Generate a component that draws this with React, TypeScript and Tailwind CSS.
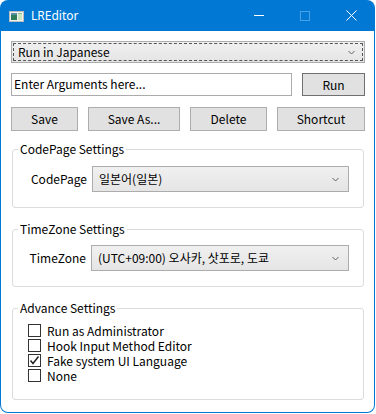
import React from "react";

const F = { fontFamily: '"Noto Sans CJK KR", "Noto Sans", sans-serif' };

function Chevron() {
  return (
    <svg width="7" height="5" viewBox="0 0 7 5" className="shrink-0">
      <path d="M0.5 1 L3.5 4 L6.5 1" fill="none" stroke="#606060" strokeWidth="1" />
    </svg>
  );
}

function Combo({ text, focused, className }: { text: string; focused?: boolean; className?: string }) {
  return (
    <div
      className={`flex items-center border border-[#acacac] bg-gradient-to-b from-[#f0f0f0] to-[#e5e5e5] text-[12px] text-black ${className ?? ""}`}
    >
      <div
        className={`flex flex-1 items-center self-stretch justify-between pl-[4px] pr-[7px] ${
          focused ? "m-[1px] border border-dashed border-[#555]" : "m-[1px] border border-transparent"
        }`}
      >
        <span className="leading-none">{text}</span>
        <Chevron />
      </div>
    </div>
  );
}

function Btn({ label, className, dark }: { label: string; className?: string; dark?: boolean }) {
  return (
    <div
      className={`flex items-center justify-center bg-[#e1e1e1] border text-[12px] text-black ${
        dark ? "border-[#707070]" : "border-[#adadad]"
      } ${className ?? ""}`}
    >
      {label}
    </div>
  );
}

function Group({ title, children, className }: { title: string; children: React.ReactNode; className?: string }) {
  return (
    <fieldset className={`mx-[1px] border border-[#dcdcdc] rounded-[3px] ${className ?? ""}`}>
      <legend className="ml-[5px] px-[2px] text-[12px] leading-[16px] text-black">{title}</legend>
      {children}
    </fieldset>
  );
}

function Check({ label, checked }: { label: string; checked?: boolean }) {
  return (
    <div className="flex items-center h-[15px]">
      <div className="w-[13px] h-[13px] border border-[#333333] bg-white flex items-center justify-center">
        {checked && (
          <svg width="11" height="11" viewBox="0 0 11 11">
            <path d="M1.5 5.5 L4 8.5 L9.5 1.5" fill="none" stroke="#222" strokeWidth="1.5" />
          </svg>
        )}
      </div>
      <span className="ml-[6px] text-[12px] leading-[14px] text-black">{label}</span>
    </div>
  );
}

export default function App() {
  return (
    <div className="w-[376px] h-[414px] bg-white" style={F}>
      <div className="w-[375px] h-[413px] flex flex-col rounded-[8px] overflow-hidden bg-[#0078d4]">
        {/* title bar */}
        <div className="h-[31px] flex items-center shrink-0">
          <svg width="15" height="11" viewBox="0 0 15 11" className="ml-[9px] mt-[1px]">
            <rect x="0.5" y="0.5" width="14" height="10" fill="#f2f2f2" stroke="#bdbdbd" />
            <rect x="2" y="2" width="6" height="7" fill="#2e7d5b" />
            <rect x="2" y="2" width="6" height="2" fill="#5a8fa8" />
            <rect x="9" y="2" width="4" height="7" fill="#c8e6c0" />
            <rect x="9" y="2" width="4" height="1" fill="#8cc08a" />
          </svg>
          <span className="ml-[7px] text-[12px] text-white" style={{ fontFamily: '"Noto Sans", sans-serif' }}>
            LREditor
          </span>
          <div className="flex-1" />
          <div className="w-[46px] h-full flex items-center justify-center">
            <div className="w-[10px] h-[1px] bg-white" />
          </div>
          <div className="w-[46px] h-full flex items-center justify-center">
            <div className="w-[10px] h-[10px] border border-[#4aa0e6]" />
          </div>
          <div className="w-[46px] h-full flex items-center justify-center mr-[1px]">
            <svg width="11" height="11" viewBox="0 0 11 11">
              <path d="M0.5 0.5 L10.5 10.5 M10.5 0.5 L0.5 10.5" stroke="white" strokeWidth="1" />
            </svg>
          </div>
        </div>
        {/* body */}
        <div className="flex-1 mx-[1px] mb-[1px] bg-white rounded-b-[7px] pl-[10px] pr-[9px] pt-[10px] flex flex-col">
          <Combo text="Run in Japanese" focused className="h-[22px]" />
          <div className="flex items-center mt-[10px] h-[23px]">
            <div className="w-[281px] h-[23px] border border-[#ababab] bg-white text-[12px] text-black flex items-center pl-[2px] pb-[2px]">
              Enter Arguments here...
            </div>
            <div className="flex-1" />
            <Btn label="Run" dark className="w-[63px] h-[23px]" />
          </div>
          <div className="flex mt-[11px] h-[24px]">
            <Btn label="Save" className="w-[67px]" />
            <Btn label="Save As..." className="w-[92px] ml-[10px]" />
            <Btn label="Delete" className="w-[77px] ml-[10px]" />
            <Btn label="Shortcut" className="w-[88px] ml-[10px]" />
          </div>

          <Group title="CodePage Settings" className="mt-[10px] h-[67px]">
            <div className="flex items-center mt-[9px]">
              <span className="w-[74px] text-right text-[12px] text-black">CodePage</span>
              <Combo text="일본어(일본)" className="ml-[5px] w-[257px] h-[26px]" />
            </div>
          </Group>

          <Group title="TimeZone Settings" className="mt-[13px] h-[66px]">
            <div className="flex items-center mt-[8px]">
              <span className="w-[73px] text-right text-[12px] text-black">TimeZone</span>
              <Combo text="(UTC+09:00) 오사카, 삿포로, 도쿄" className="ml-[5px] w-[258px] h-[26px]" />
            </div>
          </Group>

          <Group title="Advance Settings" className="mt-[13px] h-[100px]">
            <div className="flex flex-col ml-[15px] mt-[7px]">
              <Check label="Run as Administrator" />
              <Check label="Hook Input Method Editor" />
              <Check label="Fake system UI Language" checked />
              <Check label="None" />
            </div>
          </Group>
        </div>
      </div>
    </div>
  );
}
